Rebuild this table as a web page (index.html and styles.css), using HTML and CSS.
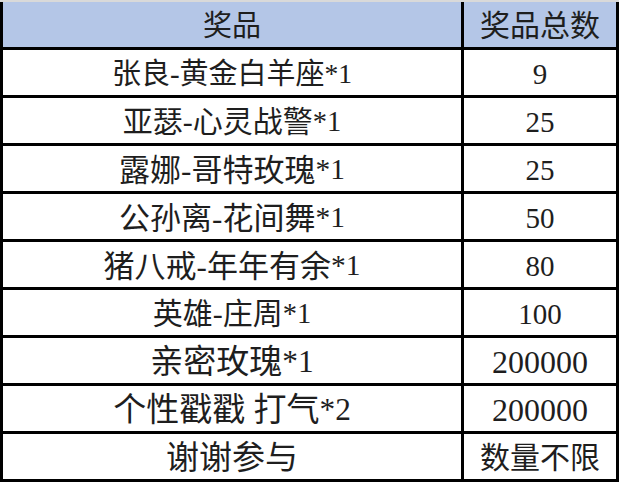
FILE: index.html
```html
<!DOCTYPE html>
<html lang="zh-CN">
<head>
<meta charset="utf-8">
<title>奖品</title>
<link rel="stylesheet" href="styles.css">
</head>
<body>
<div class="prize-table">
  <div class="cell head">奖品</div>
  <div class="cell head head-count">奖品总数</div>

  <div class="cell s29">张良-黄金白羊座<span class="lat">*1</span></div>
  <div class="cell num n29">9</div>

  <div class="cell s30">亚瑟-心灵战警<span class="lat">*1</span></div>
  <div class="cell num n29">25</div>

  <div class="cell s31">露娜-哥特玫瑰<span class="lat">*1</span></div>
  <div class="cell num n29">25</div>

  <div class="cell s31">公孙离-花间舞<span class="lat">*1</span></div>
  <div class="cell num n29">50</div>

  <div class="cell s31">猪八戒-年年有余<span class="lat">*1</span></div>
  <div class="cell num n29">80</div>

  <div class="cell s30">英雄-庄周<span class="lat">*1</span></div>
  <div class="cell num n29">100</div>

  <div class="cell s33">亲密玫瑰<span class="lat">*1</span></div>
  <div class="cell num n32">200000</div>

  <div class="cell s33">个性戳戳 打气<span class="lat">*2</span></div>
  <div class="cell num n32">200000</div>

  <div class="cell s33">谢谢参与</div>
  <div class="cell s30">数量不限</div>
</div>
</body>
</html>
```

FILE: styles.css
```css
html, body {
  margin: 0;
  padding: 0;
  background: #ffffff;
}

.prize-table {
  box-sizing: border-box;
  width: 619px;
  height: 482px;
  display: grid;
  grid-template-columns: 458px 1fr;
  grid-template-rows: repeat(10, 45px);
  gap: 3px;
  padding: 0 3px 3px 3px;
  background: #000000;
  border-top: 2px solid #d9d9d9;
}

.cell {
  display: flex;
  align-items: center;
  justify-content: center;
  padding-top: 3px;
  box-sizing: border-box;
  background: #ffffff;
  color: #1e1e1e;
  font-family: "Liberation Serif", "Noto Sans CJK SC", serif;
  font-size: 29px;
  line-height: 1;
  white-space: pre;
}

.head {
  background: #b4c6e7;
  font-size: 29px;
}

.head-count {
  font-size: 30px;
}

.s29 { font-size: 29px; }
.s30 { font-size: 30px; }
.s31 { font-size: 31px; }
.s33 { font-size: 33px; }

.lat {
  font-size: 0.95em;
}

.num.n29 { font-size: 29px; }
.num.n32 { font-size: 32px; }
```
